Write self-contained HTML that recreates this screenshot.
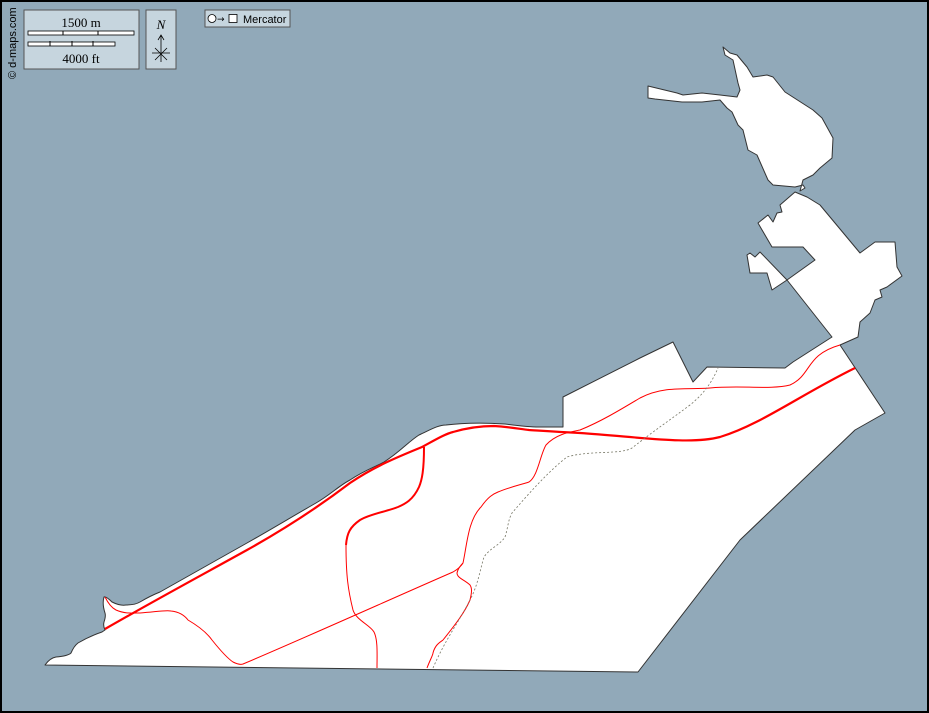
<!DOCTYPE html>
<html><head><style>
html,body{margin:0;padding:0;background:#91a9b9;}
.wrap{position:relative;width:929px;height:713px;overflow:hidden;}
</style></head><body><div class="wrap">
<svg width="929" height="713" viewBox="0 0 929 713" xmlns="http://www.w3.org/2000/svg" style="position:absolute;left:0;top:0">
<rect x="0" y="0" width="929" height="713" fill="#91a9b9"/>
<g fill="#fff" stroke="#333" stroke-width="1" stroke-linejoin="round">
<path d="M723,47 L725,55 L733,60 L738,83 L740,90 L737,97 L720,95 L702,93 L683,95 L677,93 L648,86 L648,98 L655,99 L682,102 L702,102 L720,100 L727,108 L732,112 L738,125 L743,130 L748,150 L757,155 L768,180 L773,185 L795,187 L803,185 L805,188 L800,191 L803,180 L813,175 L820,168 L832,158 L833,138 L822,118 L813,110 L785,92 L773,77 L767,75 L753,77 L747,67 L737,55 L730,53 Z"/>
<path d="M45,665 Q50,658 56,657 Q68,656 71,653 Q74,646 78,643 Q90,636 102,632 L105,630 Q103,626 104,622 Q106,616 105,613 Q102,604 104,597 Q106,596 112,602 Q120,606 126,605 Q135,605 140,602 Q150,596 160,592 C190,575 220,558 247,543 C270,530 295,515 316,503 C330,495 340,485 350,480 C365,470 375,467 384,462 C400,452 408,442 419,435 C430,430 438,425 446,425 C470,422 490,423 505,424 C520,426 530,427 539,427 L563,427 L563,397 L640,358 L673,342 L693,382 L707,367 L785,368 L793,362 L832,337 L787,280 L815,260 L803,247 L772,247 L758,223 L768,215 L773,222 L777,213 L782,212 L780,205 L795,192 L807,197 L820,205 L860,253 L875,242 L895,242 L897,267 L902,276 L887,287 L880,290 L882,297 L875,300 L870,313 L860,322 L858,337 L840,345 L885,413 L855,430 L740,540 L638,672 Z"/>
<path d="M787,280 L760,252 L755,257 L750,253 L747,255 L750,273 L767,273 L772,290 Z"/>
</g>
<g fill="none" stroke="#f00">
<path stroke-width="2.2" d="M105,629 C150,603 200,576 247,550 C290,526 325,502 350,483 C375,466 400,456 422,447 C435,440 445,434 453,432 C470,427 485,426 494,426 C510,427 520,429 529,430 C545,431 560,432 580,433 C640,437 690,445 720,437 C760,425 800,395 855,368"/>
<path stroke-width="2" d="M424,447 C424,470 422,480 419,487 C413,500 405,504 398,507 C385,512 370,514 360,520 C350,527 347,533 346,545"/>
<path stroke-width="1" d="M346,545 C346,575 348,590 353,610 C356,620 370,625 374,632 C378,640 377,655 377,668"/>
<path stroke-width="1" d="M105,597 C108,603 112,608 116,610 C125,614 133,613 140,613 C155,612 165,610 171,611 C180,612 185,616 188,620 C200,627 207,633 212,640 C220,650 227,658 233,662 C237,664 240,665 243,664 C300,640 400,595 453,572 Q460,568 463,563"/>
<path stroke-width="1" d="M463,563 C467,545 468,520 481,507 C488,497 493,494 498,492 C510,487 520,485 529,482 C538,476 540,455 546,445 C556,434 570,432 580,430 C600,422 620,410 640,398 C665,385 690,390 710,388 C740,385 770,390 790,385 C812,375 805,355 840,345"/>
<path stroke-width="1" d="M427,668 C430,660 433,655 433,653 C435,645 440,642 443,640 C455,625 465,612 470,600 C472,592 472,588 470,585 C465,580 457,578 457,573 C458,568 461,565 463,563"/>
</g>
<path fill="none" stroke="#776" stroke-width="0.8" stroke-dasharray="2,2" d="M433,668 C445,640 460,620 470,600 C478,585 480,570 484,557 C490,548 500,545 505,537 C508,528 508,520 512,513 C530,492 550,470 567,457 C590,450 620,455 632,448 C655,430 670,420 690,405 C705,393 713,380 718,368"/>
<g font-family="Liberation Serif, serif" font-size="13" fill="#000">
<rect x="24" y="10" width="115" height="59" fill="#c6d5de" stroke="#555"/>
<text x="81" y="27" text-anchor="middle">1500 m</text>
<rect x="28" y="31" width="106" height="4" fill="#fff" stroke="#000" stroke-width="0.8"/>
<path d="M63,31v4M98,31v4" stroke="#000"/>
<rect x="28" y="42" width="87" height="4" fill="#fff" stroke="#000" stroke-width="0.8"/>
<path d="M50,41v5M72,41v5M93,41v5" stroke="#000"/>
<text x="81" y="63" text-anchor="middle">4000 ft</text>
<rect x="146" y="10" width="30" height="59" fill="#c6d5de" stroke="#555"/>
<text x="161" y="29" text-anchor="middle" font-style="italic">N</text>
<path d="M161,62V35M158,40l3,-5l3,5M152,53h18M155,48l12,12M167,48l-12,12" stroke="#000" fill="none" stroke-width="0.8"/>
</g>
<rect x="205" y="10" width="85" height="17" fill="#c6d5de" stroke="#555"/>
<circle cx="212" cy="18.5" r="4" fill="#fff" stroke="#000" stroke-width="0.8"/>
<text x="217" y="22" font-family="DejaVu Sans, sans-serif" font-size="9">→</text>
<rect x="229" y="14.5" width="8" height="8" fill="#fff" stroke="#000" stroke-width="0.8"/>
<text x="243" y="23" font-family="Liberation Sans, sans-serif" font-size="11">Mercator</text>
<text transform="translate(16,79) rotate(-90)" font-family="Liberation Sans, sans-serif" font-size="11" fill="#000">© d-maps.com</text>
<rect x="1" y="1" width="927" height="711" fill="none" stroke="#000" stroke-width="2"/>
</svg>
</div></body></html>
